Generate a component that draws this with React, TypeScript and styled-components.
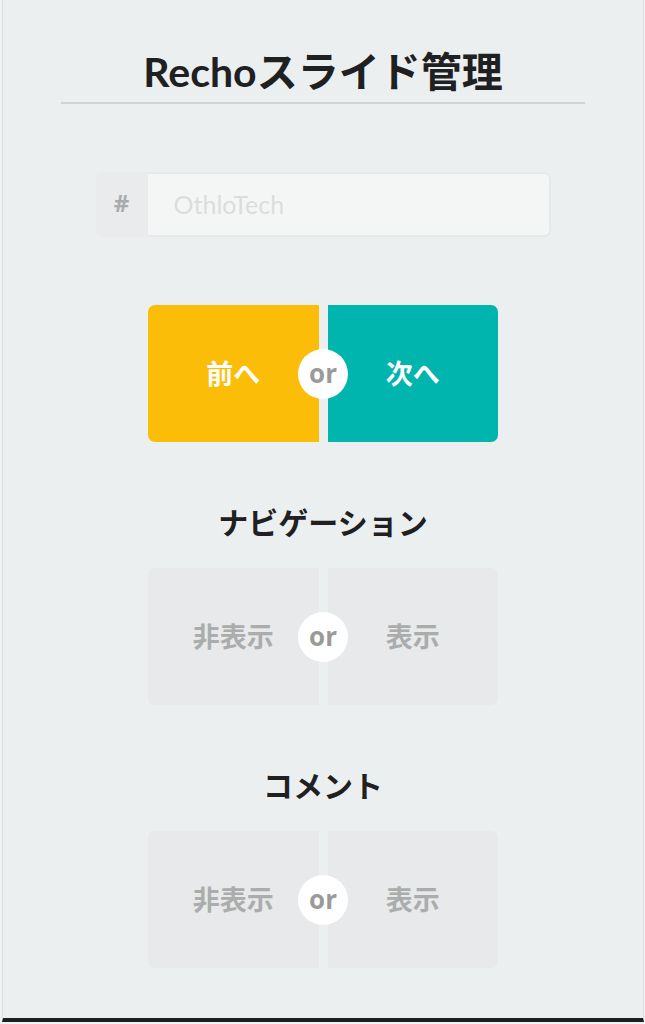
import { useState } from 'react';
import styled, { createGlobalStyle } from 'styled-components';

type Tone = 'yellow' | 'teal' | 'plain';

interface ChoiceButtonProps {
  $tone: Tone;
}

interface ChoiceProps {
  label: string;
  left: string;
  right: string;
  leftTone?: Tone;
  rightTone?: Tone;
}

const backgrounds = {
  yellow: '#fbbd08',
  teal: '#00b5ad',
  plain: '#e7e9ea',
};

const Choice = ({
  label,
  left,
  right,
  leftTone = 'plain',
  rightTone = 'plain',
}: ChoiceProps) => (
  <ButtonGroup role="group" aria-label={label}>
    <ChoiceButton type="button" $tone={leftTone}>
      {left}
    </ChoiceButton>
    <ChoiceButton type="button" $tone={rightTone}>
      {right}
    </ChoiceButton>
    <Or>or</Or>
  </ButtonGroup>
);

const App = () => {
  const [tag, setTag] = useState('');

  return (
    <>
      <GlobalStyle />
      <Page>
        <Title>Rechoスライド管理</Title>
        <TagField>
          <TagLabel htmlFor="tag">#</TagLabel>
          <TagInput
            id="tag"
            type="text"
            placeholder="OthloTech"
            value={tag}
            onChange={(e) => setTag(e.target.value)}
          />
        </TagField>
        <Choice
          label="スライド"
          left="前へ"
          right="次へ"
          leftTone="yellow"
          rightTone="teal"
        />
        <SectionTitle>ナビゲーション</SectionTitle>
        <Choice label="ナビゲーション" left="非表示" right="表示" />
        <SectionTitle>コメント</SectionTitle>
        <Choice label="コメント" left="非表示" right="表示" />
      </Page>
    </>
  );
};

const GlobalStyle = createGlobalStyle`
  * {
    box-sizing: border-box;
  }

  body {
    margin: 0;
    background: #f1f2f3;
    color: #1f2021;
    font-family: Lato, 'Noto Sans CJK JP', sans-serif;
  }
`;

const Page = styled.main`
  display: flex;
  flex-direction: column;
  align-items: center;
  margin: 0 1px 2px 2px;
  padding: 42px 58px 50px;
  background: #ebeff0;
  border: 1px solid #dcdfe1;
  border-top: 0;
  border-bottom: 4px solid #1b1f20;
`;

const Title = styled.h1`
  align-self: stretch;
  margin: 0 0 68px;
  border-bottom: 2px solid #d0d4d5;
  font-size: 41px;
  font-weight: 700;
  line-height: 60px;
  text-align: center;
`;

const TagField = styled.div`
  display: flex;
  width: 100%;
  max-width: 455px;
  height: 65px;
  margin-bottom: 68px;
`;

const TagLabel = styled.label`
  flex: 0 0 52px;
  border-radius: 7px 0 0 7px;
  background: #e9ebec;
  color: #a9abac;
  font-family: 'Open Sans', sans-serif;
  font-size: 24px;
  font-weight: 700;
  line-height: 62px;
  text-align: center;
`;

const TagInput = styled.input`
  flex: 1;
  min-width: 0;
  padding: 0 26px 2px;
  border: 2px solid #e6e9ea;
  border-left: 0;
  border-radius: 0 7px 7px 0;
  background: #f4f6f5;
  color: #1f2021;
  font-family: inherit;
  font-size: 25px;

  &::placeholder {
    color: #dbdddd;
    opacity: 1;
  }
`;

const ButtonGroup = styled.div`
  position: relative;
  display: flex;
  gap: 9px;
  width: 100%;
  max-width: 350px;
  height: 137px;
`;

const ChoiceButton = styled.button<ChoiceButtonProps>`
  flex: 1;
  padding: 0 0 3px;
  border: 0;
  background: ${({ $tone }) => backgrounds[$tone]};
  color: ${({ $tone }) => ($tone === 'plain' ? '#abadad' : 'white')};
  font-family: 'Noto Sans CJK JP', sans-serif;
  font-size: 27px;
  font-weight: 700;
  cursor: pointer;

  &:first-child {
    border-radius: 7px 0 0 7px;
  }

  &:nth-child(2) {
    border-radius: 0 7px 7px 0;
  }
`;

const Or = styled.span`
  position: absolute;
  top: 50%;
  left: 50%;
  width: 50px;
  height: 50px;
  border-radius: 50%;
  background: white;
  color: #999b9b;
  font-family: 'Open Sans', sans-serif;
  font-size: 26px;
  font-weight: 700;
  line-height: 48px;
  text-align: center;
  transform: translate(-50%, -50%);
`;

const SectionTitle = styled.h2`
  margin: 58px 0 24px;
  font-size: 30px;
  font-weight: 700;
  line-height: 44px;
  text-align: center;
`;

export default App;
